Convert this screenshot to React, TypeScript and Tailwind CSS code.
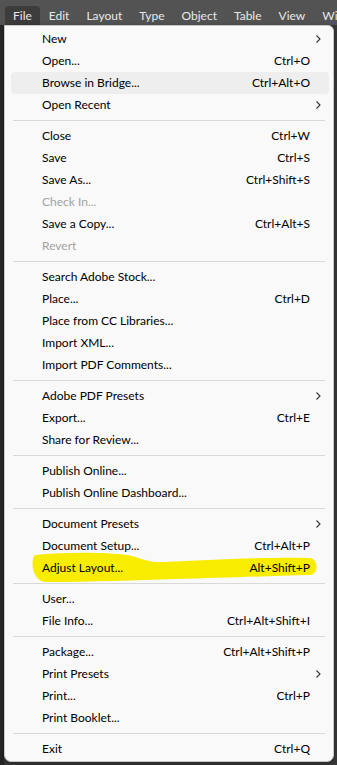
import React from 'react';

type Item = { label: string; shortcut?: string; sub?: boolean; disabled?: boolean; hover?: boolean; mark?: boolean };

const groups: Item[][] = [
  [
    { label: 'New', sub: true },
    { label: 'Open...', shortcut: 'Ctrl+O' },
    { label: 'Browse in Bridge...', shortcut: 'Ctrl+Alt+O', hover: true },
    { label: 'Open Recent', sub: true },
  ],
  [
    { label: 'Close', shortcut: 'Ctrl+W' },
    { label: 'Save', shortcut: 'Ctrl+S' },
    { label: 'Save As...', shortcut: 'Ctrl+Shift+S' },
    { label: 'Check In...', disabled: true },
    { label: 'Save a Copy...', shortcut: 'Ctrl+Alt+S' },
    { label: 'Revert', disabled: true },
  ],
  [
    { label: 'Search Adobe Stock...' },
    { label: 'Place...', shortcut: 'Ctrl+D' },
    { label: 'Place from CC Libraries...' },
    { label: 'Import XML...' },
    { label: 'Import PDF Comments...' },
  ],
  [
    { label: 'Adobe PDF Presets', sub: true },
    { label: 'Export...', shortcut: 'Ctrl+E' },
    { label: 'Share for Review...' },
  ],
  [{ label: 'Publish Online...' }, { label: 'Publish Online Dashboard...' }],
  [
    { label: 'Document Presets', sub: true },
    { label: 'Document Setup...', shortcut: 'Ctrl+Alt+P' },
    { label: 'Adjust Layout...', shortcut: 'Alt+Shift+P', mark: true },
  ],
  [{ label: 'User...' }, { label: 'File Info...', shortcut: 'Ctrl+Alt+Shift+I' }],
  [
    { label: 'Package...', shortcut: 'Ctrl+Alt+Shift+P' },
    { label: 'Print Presets', sub: true },
    { label: 'Print...', shortcut: 'Ctrl+P' },
    { label: 'Print Booklet...' },
  ],
  [{ label: 'Exit', shortcut: 'Ctrl+Q' }],
];

const topMenu = ['Edit', 'Layout', 'Type', 'Object', 'Table', 'View', 'Window'];

const Chevron = () => (
  <svg width="7" height="10" viewBox="0 0 7 10" fill="none" className="absolute right-[11px] top-[6px]">
    <path d="M1.5 1.5 L5 5 L1.5 8.5" stroke="#333" strokeWidth="1.1" />
  </svg>
);

// yellow marker scribble behind "Adjust Layout..."
const Marker = () => (
  <svg className="absolute left-0 top-[-6px]" width="320" height="34" viewBox="0 0 320 34">
    <path
      d="M30 4 C60 1 100 1 122 4 C135 6 140 12 160 11 C200 9 260 6 305 7 C313 8 314 22 306 24 C260 25 220 27 170 28 C130 29 90 31 40 31 C27 30 25 8 30 4 Z"
      fill="#f8ec00"
    />
  </svg>
);

const Row: React.FC<{ item: Item }> = ({ item }) => (
  <div className="relative h-[22px]">
    {item.hover && <div className="absolute left-[6px] right-[4px] top-0 bottom-0 rounded-[4px] bg-[#eeeeee]" />}
    {item.mark && <Marker />}
    <div
      className={`relative flex h-full items-center justify-between pl-[37px] pr-[23px] text-[12px] ${
        item.disabled ? 'text-[#a3a3a3]' : 'text-black'
      }`}
    >
      <span>{item.label}</span>
      {item.shortcut && <span>{item.shortcut}</span>}
    </div>
    {item.sub && <Chevron />}
  </div>
);

export default function App() {
  return (
    <div
      className="relative h-[765px] w-[337px] overflow-hidden bg-[#2e2e2e]"
      style={{ fontFamily: 'Lato, "Noto Sans", sans-serif' }}
    >
      <div className="flex h-[25px] items-end overflow-hidden whitespace-nowrap bg-[#535353] text-[12px] text-[#e8e8e8]">
        <div className="ml-[5px] flex h-[19px] items-center rounded-t-[4px] bg-[#3c3c3c] px-[8px]">File</div>
        <div className="flex h-[19px] items-center gap-[17px] pl-[9px]">
          {topMenu.map((m) => (
            <span key={m}>{m}</span>
          ))}
        </div>
      </div>
      <div className="flex h-[740px]">
        <div className="w-[4px] bg-[#262626]" />
        <div className="flex-1 bg-[#3a3a3a]" />
      </div>

      <div className="absolute left-[4px] top-[25px] w-[330px] rounded-b-[7px] rounded-tr-[6px] border border-[#c8c8c8] bg-[#f9f9f9] pt-[2px] pb-[1px] shadow-[0_2px_6px_rgba(0,0,0,0.35)]">
        {groups.map((g, gi) => (
          <div key={gi}>
            {gi > 0 && (
              <div className="flex h-[9px] items-center px-[8px]">
                <div className="h-px w-full bg-[#d9d9d9]" />
              </div>
            )}
            {g.map((it) => (
              <Row key={it.label} item={it} />
            ))}
          </div>
        ))}
      </div>
    </div>
  );
}
